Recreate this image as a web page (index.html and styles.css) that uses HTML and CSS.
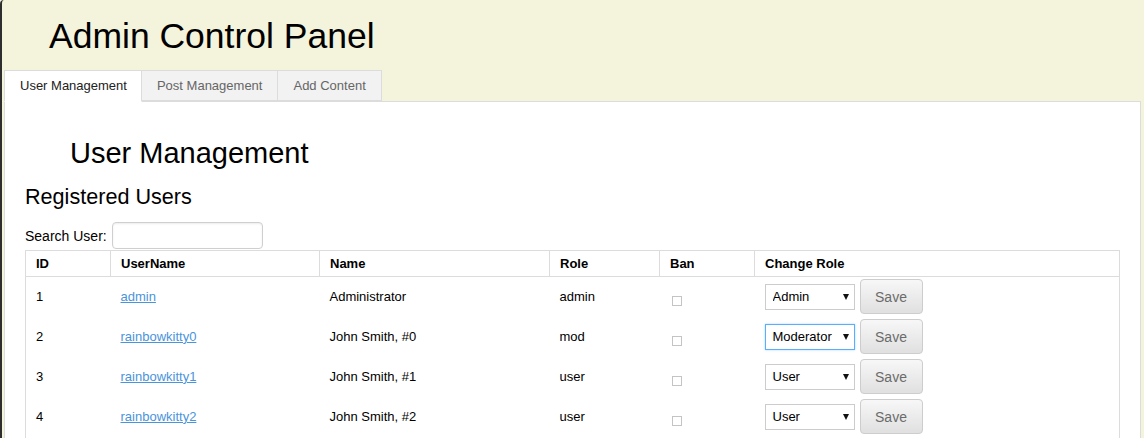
FILE: index.html
```html
<!DOCTYPE html>
<html>
<head>
<meta charset="utf-8">
<title>Admin Control Panel</title>
<link rel="stylesheet" href="styles.css">
</head>
<body>
<header class="top">
  <h1 class="title">Admin Control Panel</h1>
</header>
<nav class="tabs">
  <a class="tab active">User Management</a>
  <a class="tab">Post Management</a>
  <a class="tab">Add Content</a>
</nav>
<main class="panel">
  <h2 class="section-title">User Management</h2>
  <h3 class="sub-title">Registered Users</h3>
  <div class="search">
    <label class="search-label">Search User:</label>
    <input class="search-input" type="text">
  </div>
  <table class="users">
    <colgroup>
      <col class="c-id"><col class="c-user"><col class="c-name"><col class="c-role"><col class="c-ban"><col>
    </colgroup>
    <thead>
      <tr><th>ID</th><th>UserName</th><th>Name</th><th>Role</th><th>Ban</th><th>Change Role</th></tr>
    </thead>
    <tbody>
      <tr>
        <td>1</td><td><a class="ulink" href="#">admin</a></td><td>Administrator</td><td>admin</td>
        <td><input class="ban" type="checkbox"></td>
        <td><div class="change"><span class="sel"><select class="role-select"><option>Admin</option></select></span><button class="save">Save</button></div></td>
      </tr>
      <tr>
        <td>2</td><td><a class="ulink" href="#">rainbowkitty0</a></td><td>John Smith, #0</td><td>mod</td>
        <td><input class="ban" type="checkbox"></td>
        <td><div class="change"><span class="sel"><select class="role-select focused"><option>Moderator</option></select></span><button class="save">Save</button></div></td>
      </tr>
      <tr>
        <td>3</td><td><a class="ulink" href="#">rainbowkitty1</a></td><td>John Smith, #1</td><td>user</td>
        <td><input class="ban" type="checkbox"></td>
        <td><div class="change"><span class="sel"><select class="role-select"><option>User</option></select></span><button class="save">Save</button></div></td>
      </tr>
      <tr class="last">
        <td>4</td><td><a class="ulink" href="#">rainbowkitty2</a></td><td>John Smith, #2</td><td>user</td>
        <td><input class="ban" type="checkbox"></td>
        <td><div class="change"><span class="sel"><select class="role-select"><option>User</option></select></span><button class="save">Save</button></div></td>
      </tr>
    </tbody>
  </table>
</main>
</body>
</html>
```
FILE: styles.css
```css
html, body {
  margin: 0;
  padding: 0;
}
html {
  height: 438px;
  overflow: hidden;
}
body {
  background: #f4f3dc;
  border-left: 2px solid #2e2e2e;
  border-top-left-radius: 4px;
  font-family: "Liberation Sans", Arial, sans-serif;
  color: #000;
  height: 438px;
  box-sizing: border-box;
  overflow: hidden;
}
.top {
  padding: 16px 0 0 47px;
}
.title {
  margin: 0;
  font-size: 35.5px;
  font-weight: normal;
  line-height: 40px;
}
.tabs {
  display: flex;
  margin: 14px 0 0 2px;
  position: relative;
  z-index: 1;
}
.tab {
  display: block;
  height: 31px;
  box-sizing: border-box;
  padding: 0 15px;
  line-height: 30px;
  font-size: 13px;
  color: #666;
  background: #f2f2f2;
  border: 1px solid #dcdcdc;
  border-left: none;
  text-decoration: none;
}
.tab.active {
  background: #fff;
  color: #222;
  padding: 0 14px 0 15px;
  border-left: 1px solid #dcdcdc;
  border-bottom-color: #fff;
  height: 32px;
}
.panel {
  background: #fff;
  border: 1px solid #dcdcdc;
  margin: -1px 3px 0 2px;
  padding: 35px 20px 0 20px;
  height: 500px;
}
.section-title {
  margin: 0 0 15px 45px;
  font-size: 29px;
  font-weight: normal;
  line-height: 32px;
}
.sub-title {
  margin: 0;
  font-size: 21.6px;
  font-weight: normal;
  line-height: 26px;
}
.search {
  display: flex;
  align-items: baseline;
  gap: 5px;
  margin-top: 12px;
  margin-bottom: 1px;
}
.search-label {
  font-size: 14px;
}
.search-input {
  width: 151px;
  height: 27px;
  box-sizing: border-box;
  border: 1px solid #cfcfcf;
  border-radius: 4px;
  box-shadow: inset 0 1px 2px rgba(0, 0, 0, 0.08);
  font-size: 14px;
  padding: 3px 6px;
  margin: 0;
}
.users {
  width: 100%;
  border-collapse: collapse;
  table-layout: fixed;
  border: 1px solid #dcdcdc;
  font-size: 13px;
}
.c-id { width: 85px; }
.c-user { width: 209px; }
.c-name { width: 230px; }
.c-role { width: 110px; }
.c-ban { width: 95px; }
.users th {
  text-align: left;
  font-weight: bold;
  line-height: 16px;
  padding: 5px 10px 4px 10px;
  border: 1px solid #dcdcdc;
}
.users td {
  line-height: 16px;
  padding: 2px 10px 3px 10px;
  height: 35px;
  vertical-align: middle;
}
.users tr.last td {
  padding-bottom: 14px;
}
.ulink {
  color: #4a94dc;
  text-decoration: underline;
}
.ban {
  appearance: none;
  -webkit-appearance: none;
  width: 10px;
  height: 10px;
  margin: 0 0 0 2px;
  border: 1px solid #c4c4c4;
  background: #fff;
  vertical-align: -6px;
  box-sizing: border-box;
}
.change {
  display: flex;
  align-items: center;
  gap: 5px;
}
.sel {
  position: relative;
  display: block;
}
.sel::after {
  content: "";
  position: absolute;
  right: 6px;
  top: 10px;
  border-left: 3px solid transparent;
  border-right: 3px solid transparent;
  border-top: 6px solid #111;
  pointer-events: none;
}
.role-select {
  appearance: none;
  -webkit-appearance: none;
  width: 90px;
  height: 26px;
  box-sizing: border-box;
  border: 1px solid #cccccc;
  border-radius: 0;
  background: #fff;
  font-family: "Liberation Sans", Arial, sans-serif;
  font-size: 13px;
  color: #000;
  padding: 0 0 0 7px;
  margin: 0;
}
.role-select.focused {
  border-color: #5aaefc;
  box-shadow: 0 0 2px rgba(90, 174, 252, 0.5);
}
.save {
  width: 63px;
  height: 35px;
  box-sizing: border-box;
  border: 1px solid #cdcdcd;
  border-radius: 4px;
  background: linear-gradient(#f7f7f7, #e0e0e0);
  color: #6b6b6b;
  font-family: "Liberation Sans", Arial, sans-serif;
  font-size: 14px;
  padding: 0;
  margin: 0;
}
```
